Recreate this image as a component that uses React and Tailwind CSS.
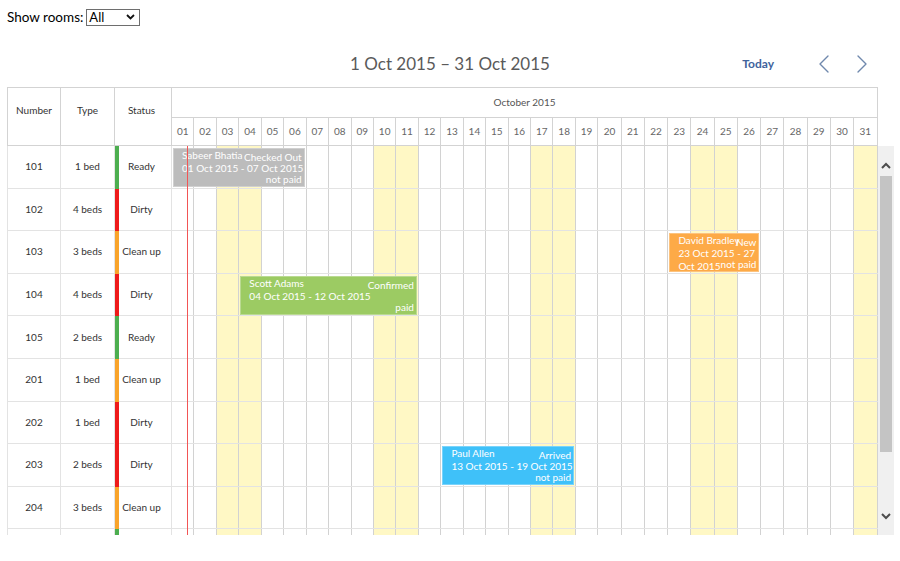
import React from 'react';
import { ChevronLeft, ChevronRight } from 'lucide-react';

const days = Array.from({ length: 31 }, (_, i) => i + 1);
const weekend = [3, 4, 10, 11, 17, 18, 24, 25, 31];

// left edge of a day column, in px from the start of the timeline
const colX = (d) => (d <= 20 ? (d - 1) * 22.45 : 19 * 22.45 + (d - 20) * 23.28);

const stripe = {
    green: 'bg-[#4cae4f]',
    red: 'bg-[#ee1b1b]',
    orange: 'bg-[#f9a42b]',
};

const rooms = [
    { number: '101', type: '1 bed', status: 'Ready', color: 'green' },
    { number: '102', type: '4 beds', status: 'Dirty', color: 'red' },
    { number: '103', type: '3 beds', status: 'Clean up', color: 'orange' },
    { number: '104', type: '4 beds', status: 'Dirty', color: 'red' },
    { number: '105', type: '2 beds', status: 'Ready', color: 'green' },
    { number: '201', type: '1 bed', status: 'Clean up', color: 'orange' },
    { number: '202', type: '1 bed', status: 'Dirty', color: 'red' },
    { number: '203', type: '2 beds', status: 'Dirty', color: 'red' },
    { number: '204', type: '3 beds', status: 'Clean up', color: 'orange' },
    { number: '205', type: '1 bed', status: 'Ready', color: 'green' },
];

const events = [
    { row: 0, start: 1, end: 7, name: 'Sabeer Bhatia', text: '01 Oct 2015 - 07 Oct 2015', state: 'Checked Out', paid: 'not paid', bg: 'bg-[#bcbcbc]' },
    { row: 2, start: 23, end: 27, name: 'David Bradley', text: '23 Oct 2015 - 27 Oct 2015', state: 'New', paid: 'not paid', bg: 'bg-[#fdaa47]' },
    { row: 3, start: 4, end: 12, name: 'Scott Adams', text: '04 Oct 2015 - 12 Oct 2015', state: 'Confirmed', paid: 'paid', bg: 'bg-[#9ccb63]' },
    { row: 7, start: 13, end: 19, name: 'Paul Allen', text: '13 Oct 2015 - 19 Oct 2015', state: 'Arrived', paid: 'not paid', bg: 'bg-[#3fc1f9]' },
];

const Event = ({ ev }) => {
    const left = colX(ev.start) + 1;
    const width = colX(ev.end) - colX(ev.start) - 3;
    return (
        <div
            className={`absolute top-[2px] h-[39px] z-[5] text-white text-[10px] leading-[13px] border border-white/30 ${ev.bg}`}
            style={{ left, width }}
        >
            <div className="pl-[8px]">
                {ev.name}
                <br />
                {ev.text}
            </div>
            <span className="absolute top-[2px] right-[2px]">{ev.state}</span>
            <span className="absolute bottom-0 right-[2px]">{ev.paid}</span>
        </div>
    );
};

const Chevron = ({ up }) => (
    <svg width="10" height="7" viewBox="0 0 10 7">
        <polyline
            points={up ? '1,6 5,2 9,6' : '1,1 5,5 9,1'}
            fill="none"
            stroke="#4d4d4d"
            strokeWidth="2"
        />
    </svg>
);

const App = () => {
    return (
        <div className="w-[900px] h-[561px] bg-white overflow-hidden font-['Lato',sans-serif] text-[#333]">
            {/* filter */}
            <div className="h-[34px] flex items-center pl-[7px] gap-[3px] text-[13.5px] text-black">
                <span>Show rooms:</span>
                <div className="w-[54px] h-[17px] border border-[#6e6e6e] flex items-center justify-between pl-[2px] pr-[4px]">
                    <span className="text-[13px] leading-none">All</span>
                    <svg width="9" height="6" viewBox="0 0 9 6">
                        <polyline points="1,1 4.5,4.5 8,1" fill="none" stroke="#111" strokeWidth="1.8" />
                    </svg>
                </div>
            </div>

            {/* navigation */}
            <div className="h-[53px] pt-[7px] grid grid-cols-[1fr_auto_1fr] items-center">
                <div />
                <div className="text-[17px] text-[#5a5a5a]">1 Oct 2015 – 31 Oct 2015</div>
                <div className="flex items-center justify-end pr-[22px]">
                    <span className="text-[12px] font-bold text-[#41639c] mr-[34px]">Today</span>
                    <ChevronLeft size={32} strokeWidth={1} color="#6f88ad" />
                    <ChevronRight size={32} strokeWidth={1} color="#6f88ad" className="ml-[6px]" />
                </div>
            </div>

            {/* header */}
            <div className="ml-[7px] flex text-[10px]">
                <div className="w-[54px] h-[59px] border-t border-l border-r border-b border-[#d3d3d3] flex items-center justify-center pb-[13px]">Number</div>
                <div className="w-[54px] h-[59px] border-t border-r border-b border-[#d3d3d3] flex items-center justify-center pb-[13px]">Type</div>
                <div className="w-[57px] h-[59px] border-t border-r border-b border-[#d3d3d3] flex items-center justify-center pb-[13px] pr-[3px]">Status</div>
                <div className="w-[706px] flex flex-col">
                    <div className="h-[31px] border-t border-r border-b border-[#d3d3d3] flex items-center justify-center text-[#555]">October 2015</div>
                    <div className="h-[28px] grid grid-cols-[repeat(19,22.45px)_repeat(12,23.28px)]">
                        {days.map((d) => (
                            <div key={d} className="border-r border-b border-[#d3d3d3] flex items-center justify-center text-[#666]">
                                {String(d).padStart(2, '0')}
                            </div>
                        ))}
                    </div>
                </div>
            </div>

            {/* body */}
            <div className="ml-[7px] flex h-[389px] overflow-hidden text-[10px]">
                <div className="w-[871px] flex flex-col">
                    {rooms.map((room, i) => (
                        <div key={room.number} className="flex h-[42.6px] shrink-0">
                            <div className="w-[54px] border-l border-r border-b border-[#e3e3e3] flex items-center justify-center">{room.number}</div>
                            <div className="w-[54px] border-r border-b border-[#e3e3e3] flex items-center justify-center">{room.type}</div>
                            <div className={`w-[4px] ${stripe[room.color]}`} />
                            <div className="w-[53px] border-r border-b border-[#e3e3e3] flex items-center justify-center pr-[7px]">{room.status}</div>
                            <div className="relative w-[706px] grid grid-cols-[repeat(19,22.45px)_repeat(12,23.28px)] border-b border-[#e3e3e3]">
                                {days.map((d) => (
                                    <div
                                        key={d}
                                        className={`border-r border-[#d2d2d2] ${weekend.includes(d) ? 'bg-[#fff8c5]' : ''}`}
                                    />
                                ))}
                                {events
                                    .filter((ev) => ev.row === i)
                                    .map((ev) => (
                                        <Event key={ev.name} ev={ev} />
                                    ))}
                                <div className="absolute top-0 bottom-[-1px] left-[15px] w-[1px] bg-[#f25555] z-10" />
                            </div>
                        </div>
                    ))}
                </div>

                {/* scrollbar */}
                <div className="w-[16px] bg-[#f0f0f0] flex flex-col">
                    <div className="h-[30px] flex items-end justify-center pb-[7px]">
                        <Chevron up />
                    </div>
                    <div className="h-[276px] mx-[2px] bg-[#c4c4c4]" />
                    <div className="flex-1 flex items-end justify-center pb-[15px]">
                        <Chevron />
                    </div>
                </div>
            </div>
        </div>
    );
};

export default App;
